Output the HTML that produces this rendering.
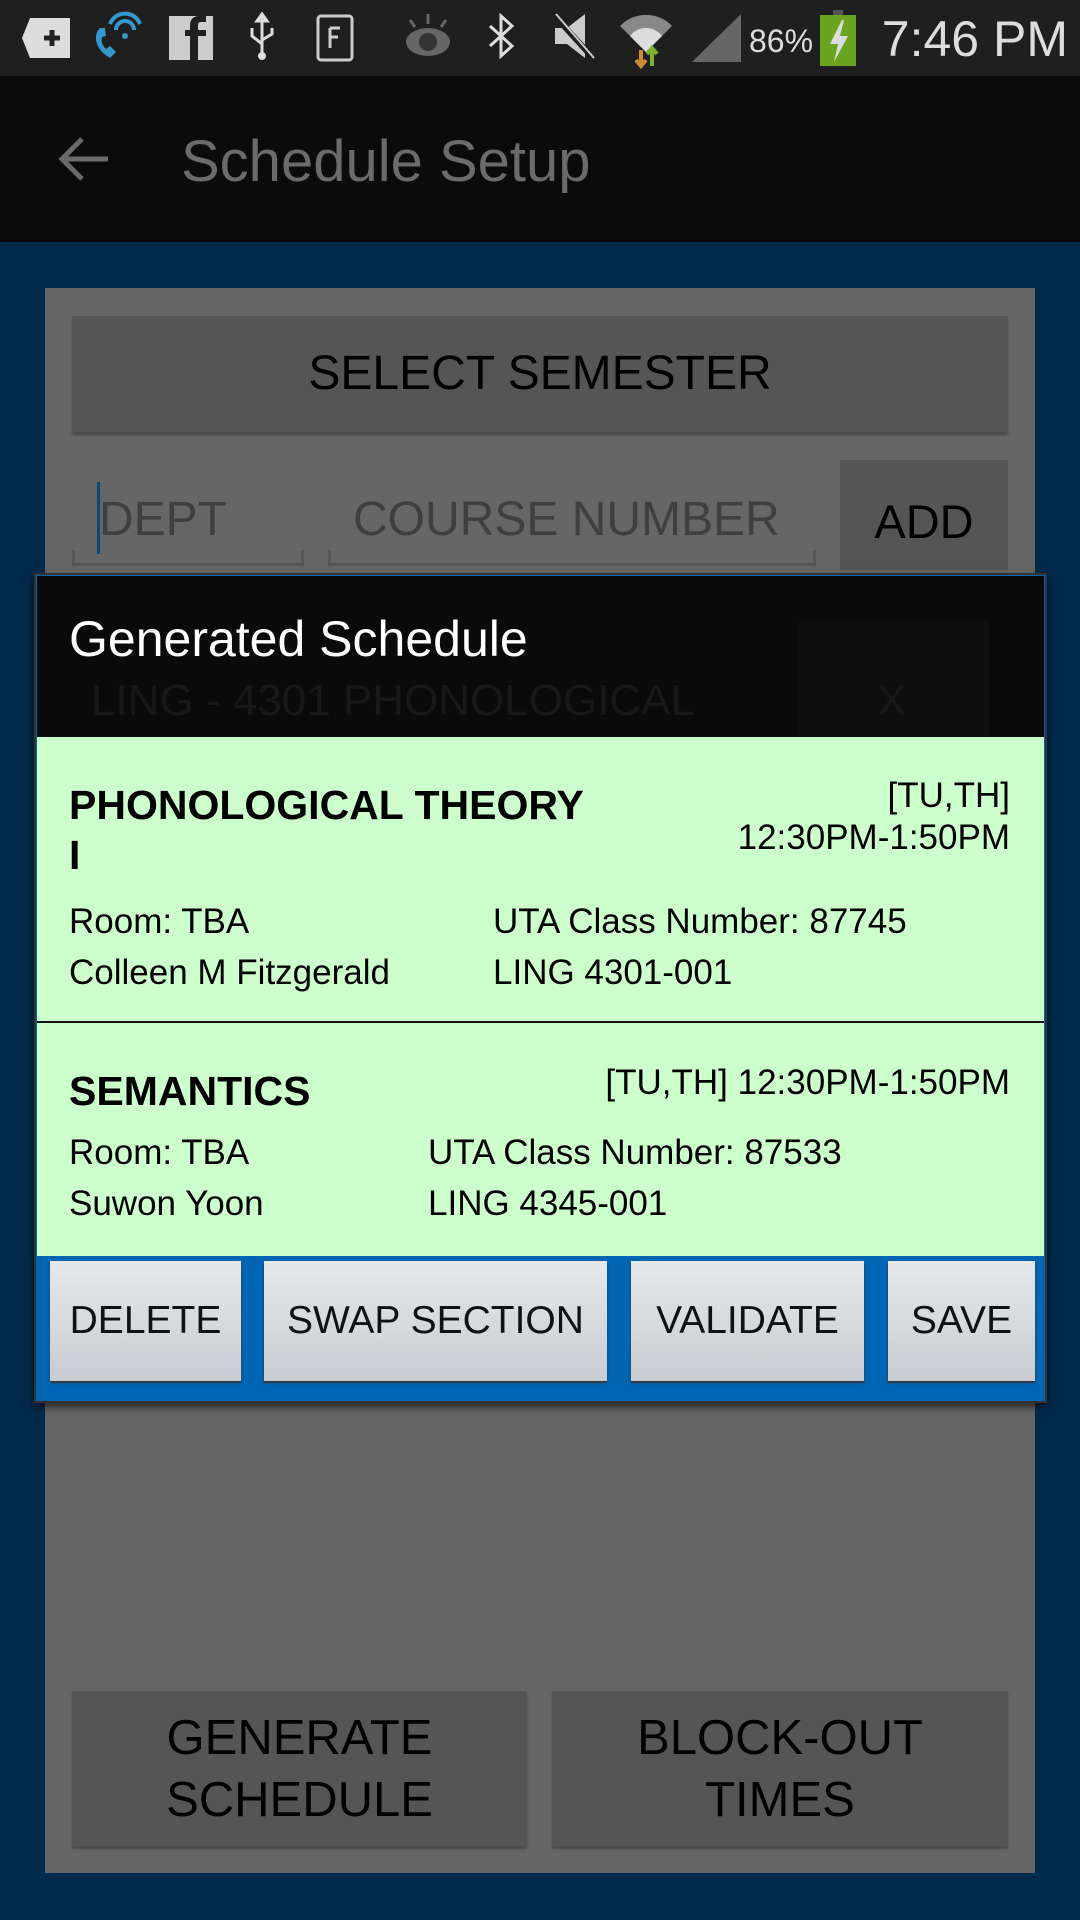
<!DOCTYPE html>
<html><head><meta charset="utf-8"><style>
*{margin:0;padding:0;box-sizing:border-box}
body{width:1080px;height:1920px;overflow:hidden;background:#002a4a;font-family:"Liberation Sans",sans-serif;position:relative}
.a{position:absolute}
.t{position:absolute;white-space:nowrap}
.gbtn{position:absolute;background:#555;box-shadow:0 3px 2px #4a4a4a;color:#000;text-align:center}
.bb{position:absolute;top:1261px;height:120px;background:linear-gradient(#e6e9eb,#c8ccd0);box-shadow:0 2px 2px #333;font-size:39px;color:#111;text-align:center;line-height:120px}
.g{font-size:35px;color:#000}
</style></head><body>
<div class="a" style="left:0;top:0;width:1080px;height:76px;background:#1f1f1f"></div>
<svg class="a" style="left:0;top:0" width="1080" height="76" viewBox="0 0 1080 76">
<path d="M30 18h40v40h-40l-8-20z" fill="#ddd"/><path d="M44 38h16M52 30v16" stroke="#222" stroke-width="5"/>
<path d="M100 28c-8 8-4 22 10 30l6-6-6-6-4 3c-4-4-5-8-4-12l4-1-1-8z" fill="#3399cc"/>
<path d="M110 24a16 16 0 0 1 30 0M116 30a9 9 0 0 1 18 0" stroke="#3399cc" stroke-width="4" fill="none"/><circle cx="125" cy="36" r="3" fill="#3399cc"/>
<rect x="169" y="16" width="44" height="44" fill="#ccc"/><path d="M198 60V36h8v-6h-8v-5c0-2 1-3 3-3h5v-6h-7c-6 0-9 4-9 9v5h-5v6h5v24z" fill="#1f1f1f"/>
<path d="M262 14v40M262 14l-5 7h10zM262 44l-10-8v-8M262 40l10-6v-6" stroke="#ddd" stroke-width="3" fill="none"/><circle cx="262" cy="56" r="4" fill="#ddd"/>
<rect x="318" y="16" width="34" height="44" rx="3" stroke="#ccc" stroke-width="3" fill="none"/><path d="M330 28v20M330 28h10M330 37h8" stroke="#ccc" stroke-width="3"/>
<ellipse cx="428" cy="42" rx="22" ry="14" fill="#666"/><circle cx="428" cy="42" r="9" fill="#333"/><path d="M428 14v10M410 20l5 7M446 20l-5 7" stroke="#666" stroke-width="3"/>
<path d="M490 26l22 20-11 10V16l11 10-22 20" stroke="#ddd" stroke-width="3" fill="none"/>
<path d="M555 28h12l18-14v44l-18-14h-12z" fill="#ccc"/><path d="M553 14l40 44" stroke="#1f1f1f" stroke-width="6"/><path d="M556 14l38 44" stroke="#ccc" stroke-width="2"/>
<path d="M620 26a36 36 0 0 1 52 0l-26 26z" fill="#888"/><path d="M630 36a20 20 0 0 1 32 0l-16 16z" fill="#ddd"/>
<path d="M641 50v16M636 60l5 6 5-6" stroke="#d08a30" stroke-width="4" fill="none"/><path d="M652 66v-18M647 54l5-6 5 6" stroke="#7ab32e" stroke-width="4" fill="none"/>
<path d="M692 62L741 14v48z" fill="#666"/>
<text x="749" y="52" font-family="Liberation Sans" font-size="32" fill="#ddd">86%</text>
<rect x="833" y="10" width="10" height="5" fill="#555"/><rect x="820" y="15" width="36" height="51" fill="#6aa520"/><path d="M842 20l-12 24h8l-4 18 14-26h-8l4-16z" fill="#ddd"/>
<text x="1068" y="56" text-anchor="end" font-family="Liberation Sans" font-size="50" fill="#ddd">7:46 PM</text>
</svg>
<div class="a" style="left:0;top:76px;width:1080px;height:166px;background:#0b0b0b"></div>
<svg class="a" style="left:58px;top:136px" width="52" height="46"><path d="M4 23h46M24 3L4 23l20 20" stroke="#6a6a6a" stroke-width="5" fill="none"/></svg>
<div class="t" style="left:181px;top:128px;font-size:58px;color:#6b6b6b">Schedule Setup</div>
<div class="a" style="left:45px;top:288px;width:990px;height:1585px;background:#666"></div>
<div class="gbtn" style="left:72px;top:316px;width:936px;height:116px;font-size:48px;line-height:116px">SELECT SEMESTER</div>
<div class="a" style="left:72px;top:460px;width:232px;height:106px;border-bottom:3px solid #555;border-left:3px solid #555;border-right:3px solid #555;border-top:0;clip-path:inset(90px 0 0 0)"></div>
<div class="a" style="left:97px;top:482px;width:3px;height:72px;background:#0a4a7a"></div>
<div class="t" style="left:99px;top:492px;font-size:48px;color:#3f3f3f">DEPT</div>
<div class="a" style="left:328px;top:460px;width:488px;height:106px;border-bottom:3px solid #555;border-left:3px solid #555;border-right:3px solid #555;clip-path:inset(90px 0 0 0)"></div>
<div class="t" style="left:353px;top:492px;font-size:48px;color:#3f3f3f">COURSE NUMBER</div>
<div class="gbtn" style="left:840px;top:460px;width:168px;height:110px;font-size:47px;line-height:124px;box-shadow:none">ADD</div>
<div class="gbtn" style="left:72px;top:1691px;width:455px;height:155px;font-size:49px;line-height:62px;padding-top:16px">GENERATE<br>SCHEDULE</div>
<div class="gbtn" style="left:552px;top:1691px;width:456px;height:155px;font-size:49px;line-height:62px;padding-top:16px">BLOCK-OUT<br>TIMES</div>
<div class="a" style="left:34px;top:573px;width:1013px;height:830px;background:#0066b3;border:2px solid #333;box-shadow:0 4px 8px rgba(0,0,0,.6)"></div>
<div class="a" style="left:37px;top:576px;width:1007px;height:161px;background:#0a0a0a;overflow:hidden">
<div class="t" style="left:54px;top:100px;font-size:44px;color:#181818">LING - 4301  PHONOLOGICAL</div>
<div class="a" style="left:762px;top:45px;width:190px;height:116px;background:#0e0e0e"></div>
<div class="t" style="left:840px;top:100px;font-size:44px;color:#181818">X</div>
<div class="t" style="left:32px;top:34px;font-size:50px;color:#fff">Generated Schedule</div>
</div>
<div class="a" style="left:37px;top:737px;width:1007px;height:519px;background:#ccffcc"></div>
<div class="a" style="left:37px;top:1021px;width:1007px;height:2px;background:#111"></div>
<div class="t" style="left:69px;top:780px;font-size:41px;font-weight:bold;color:#000;line-height:50px">PHONOLOGICAL THEORY<br>I</div>
<div class="t g" style="right:70px;top:775px;text-align:right;line-height:42px">[TU,TH]<br>12:30PM-1:50PM</div>
<div class="t g" style="left:69px;top:896px;line-height:51px">Room: TBA<br>Colleen M Fitzgerald</div>
<div class="t g" style="left:493px;top:896px;line-height:51px">UTA Class Number: 87745<br>LING 4301-001</div>
<div class="t" style="left:69px;top:1068px;font-size:41px;font-weight:bold;color:#000">SEMANTICS</div>
<div class="t g" style="right:70px;top:1063px">[TU,TH] 12:30PM-1:50PM</div>
<div class="t g" style="left:69px;top:1127px;line-height:51px">Room: TBA<br>Suwon Yoon</div>
<div class="t g" style="left:428px;top:1127px;line-height:51px">UTA Class Number: 87533<br>LING 4345-001</div>
<div class="bb" style="left:50px;width:191px">DELETE</div>
<div class="bb" style="left:264px;width:343px">SWAP SECTION</div>
<div class="bb" style="left:631px;width:233px">VALIDATE</div>
<div class="bb" style="left:888px;width:147px">SAVE</div>
</body></html>
